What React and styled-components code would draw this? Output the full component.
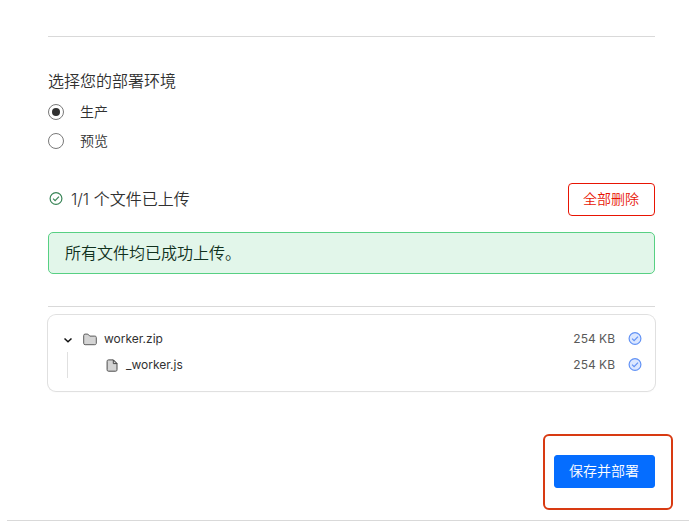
import React, { useState } from "react";
import styled, { createGlobalStyle } from "styled-components";

const GlobalStyle = createGlobalStyle`
  *, *::before, *::after { box-sizing: border-box; }
  body {
    margin: 0;
    background: #fff;
    color: #313131;
    font-family: Inter, "Noto Sans CJK SC", sans-serif;
    font-size: 14px;
    font-weight: 350;
    line-height: 20px;
  }
`;

const Page = styled.div`
  padding: 36px 7px 0;
`;

const Content = styled.main`
  padding: 0 34px 32px 41px;
`;

const Divider = styled.hr`
  margin: 0;
  border: 0;
  border-top: 1px solid #d9d9d9;
`;

const Environment = styled.fieldset`
  display: flex;
  flex-direction: column;
  gap: 9px;
  margin: 0;
  padding: 32px 0 0;
  border: 0;
`;

const Legend = styled.legend`
  float: left;
  padding: 0;
  font-size: 16px;
  line-height: 24px;
`;

const Option = styled.label`
  display: flex;
  align-items: center;
  gap: 16px;
`;

const Radio = styled.input`
  appearance: none;
  display: grid;
  place-content: center;
  width: 16px;
  height: 16px;
  margin: 0;
  border: 1px solid #797979;
  border-radius: 50%;

  &:checked::before {
    content: "";
    width: 8px;
    height: 8px;
    border-radius: 50%;
    background: #313131;
  }
`;

const UploadHeader = styled.div`
  display: flex;
  align-items: flex-end;
  justify-content: space-between;
  margin-top: 32px;
`;

const UploadStatus = styled.h2`
  display: flex;
  align-items: center;
  gap: 8px;
  margin: 0;
  padding: 0 0 5px 1px;
  font-size: 16px;
  font-weight: 350;
  line-height: 24px;
`;

const Button = styled.button`
  height: 33px;
  padding: 0 15px 2px 14px;
  border: 1px solid ${(p) => (p.$primary ? "#056dff" : "#e81403")};
  border-radius: ${(p) => (p.$primary ? "3px" : "4px")};
  background: ${(p) => (p.$primary ? "#056dff" : "#fff")};
  color: ${(p) => (p.$primary ? "#fff" : "#e81403")};
  font: inherit;
  line-height: 20px;
  cursor: pointer;
`;

const Alert = styled.div`
  margin: 16px 0 32px;
  padding: 8px 16px;
  border: 1px solid #57d083;
  border-radius: 5px;
  background: #e2f6ea;
  color: #10311d;
  font-size: 16px;
  line-height: 24px;
`;

const FileCard = styled.section`
  margin-top: 8px;
  padding: 11px 13px 13px;
  border-radius: 8px;
  box-shadow: 0 0 0 1px #e0e0e0, 0 1px 2px #0000000d;
  font-size: 12px;
  font-weight: 400;
`;

const FileList = styled.ul`
  margin: 0;
  padding: 0;
  list-style: none;
`;

const Nested = styled(FileList)`
  margin-left: 6px;
  padding-left: 37px;
  border-left: 1px solid #e0e0e0;
`;

const FileRow = styled.div`
  display: flex;
  align-items: center;
  height: 26px;
`;

const Toggle = styled.button`
  display: flex;
  align-items: center;
  width: 14px;
  height: 14px;
  margin-right: 8px;
  padding: 0;
  border: 0;
  background: none;
  color: #111;
`;

const FileName = styled.span`
  flex: 1;
  margin-left: 7px;
`;

const FileSize = styled.span`
  margin-right: 13px;
  color: #595959;
`;

const Actions = styled.div`
  display: flex;
  justify-content: flex-end;
  padding-top: 64px;
`;

const Highlight = styled.div`
  position: relative;

  &::after {
    content: "";
    position: absolute;
    inset: -21px -18px -22px -11px;
    border: 2px solid #d83a12;
    border-radius: 6px;
    pointer-events: none;
  }
`;

const Icon = styled.svg`
  display: block;
  flex: none;
`;

function CheckCircle({ stroke, fill = "none", label }) {
  return (
    <Icon width="14" height="14" viewBox="0 0 14 14" fill="none" stroke={stroke} strokeWidth="1.2" role="img" aria-label={label}>
      <circle cx="7" cy="6.5" r="5.9" fill={fill} />
      <path d="m4.1 6.7 2 2L10 4.7" />
    </Icon>
  );
}

function Chevron() {
  return (
    <Icon width="14" height="14" viewBox="0 0 14 14" fill="none" stroke="currentColor" strokeWidth="1.5" aria-hidden="true">
      <path d="m3.5 6.5 3.5 3.3 3.5-3.3" />
    </Icon>
  );
}

function FolderIcon() {
  return (
    <Icon width="14" height="14" viewBox="0 0 14 14" fill="#d4d4d4" stroke="#5c5c5c" strokeLinejoin="round" aria-hidden="true">
      <path d="M.7 3.5c0-.9.5-1.4 1.4-1.4h2.7l2 2h5c.9 0 1.5.5 1.5 1.4v5.8c0 .9-.6 1.4-1.5 1.4H2.1c-.9 0-1.4-.5-1.4-1.4z" />
    </Icon>
  );
}

function FileIcon() {
  return (
    <Icon width="14" height="14" viewBox="0 0 14 14" fill="#d4d4d4" stroke="#4a4a4a" strokeLinejoin="round" aria-hidden="true">
      <path d="M3.6 1.9h4.7l3.7 3.7v6.1c0 1-.5 1.5-1.5 1.5H3.6c-1 0-1.5-.5-1.5-1.5V3.4c0-1 .5-1.5 1.5-1.5z" />
      <path d="M8.3 1.9v3.7H12z" />
    </Icon>
  );
}

function FileDetails({ icon, name, size }) {
  return (
    <>
      {icon}
      <FileName>{name}</FileName>
      <FileSize>{size}</FileSize>
      <CheckCircle stroke="#6292f5" fill="#dbe7ff" label="已上传" />
    </>
  );
}

const environments = [
  { value: "production", label: "生产" },
  { value: "preview", label: "预览" },
];

export default function App() {
  const [environment, setEnvironment] = useState("production");
  const [open, setOpen] = useState(true);

  return (
    <>
      <GlobalStyle />
      <Page>
        <Content>
          <Divider />
          <Environment>
            <Legend>选择您的部署环境</Legend>
            {environments.map(({ value, label }) => (
              <Option key={value}>
                <Radio
                  type="radio"
                  name="environment"
                  value={value}
                  checked={environment === value}
                  onChange={() => setEnvironment(value)}
                />
                {label}
              </Option>
            ))}
          </Environment>
          <UploadHeader>
            <UploadStatus>
              <CheckCircle stroke="#398557" label="完成" />
              1/1 个文件已上传
            </UploadStatus>
            <Button type="button">全部删除</Button>
          </UploadHeader>
          <Alert role="status">所有文件均已成功上传。</Alert>
          <Divider />
          <FileCard>
            <FileList>
              <li>
                <FileRow>
                  <Toggle type="button" aria-label="worker.zip" aria-expanded={open} onClick={() => setOpen(!open)}>
                    <Chevron />
                  </Toggle>
                  <FileDetails icon={<FolderIcon />} name="worker.zip" size="254 KB" />
                </FileRow>
                {open && (
                  <Nested>
                    <li>
                      <FileRow>
                        <FileDetails icon={<FileIcon />} name="_worker.js" size="254 KB" />
                      </FileRow>
                    </li>
                  </Nested>
                )}
              </li>
            </FileList>
          </FileCard>
          <Actions>
            <Highlight>
              <Button type="button" $primary>保存并部署</Button>
            </Highlight>
          </Actions>
        </Content>
        <Divider />
      </Page>
    </>
  );
}
